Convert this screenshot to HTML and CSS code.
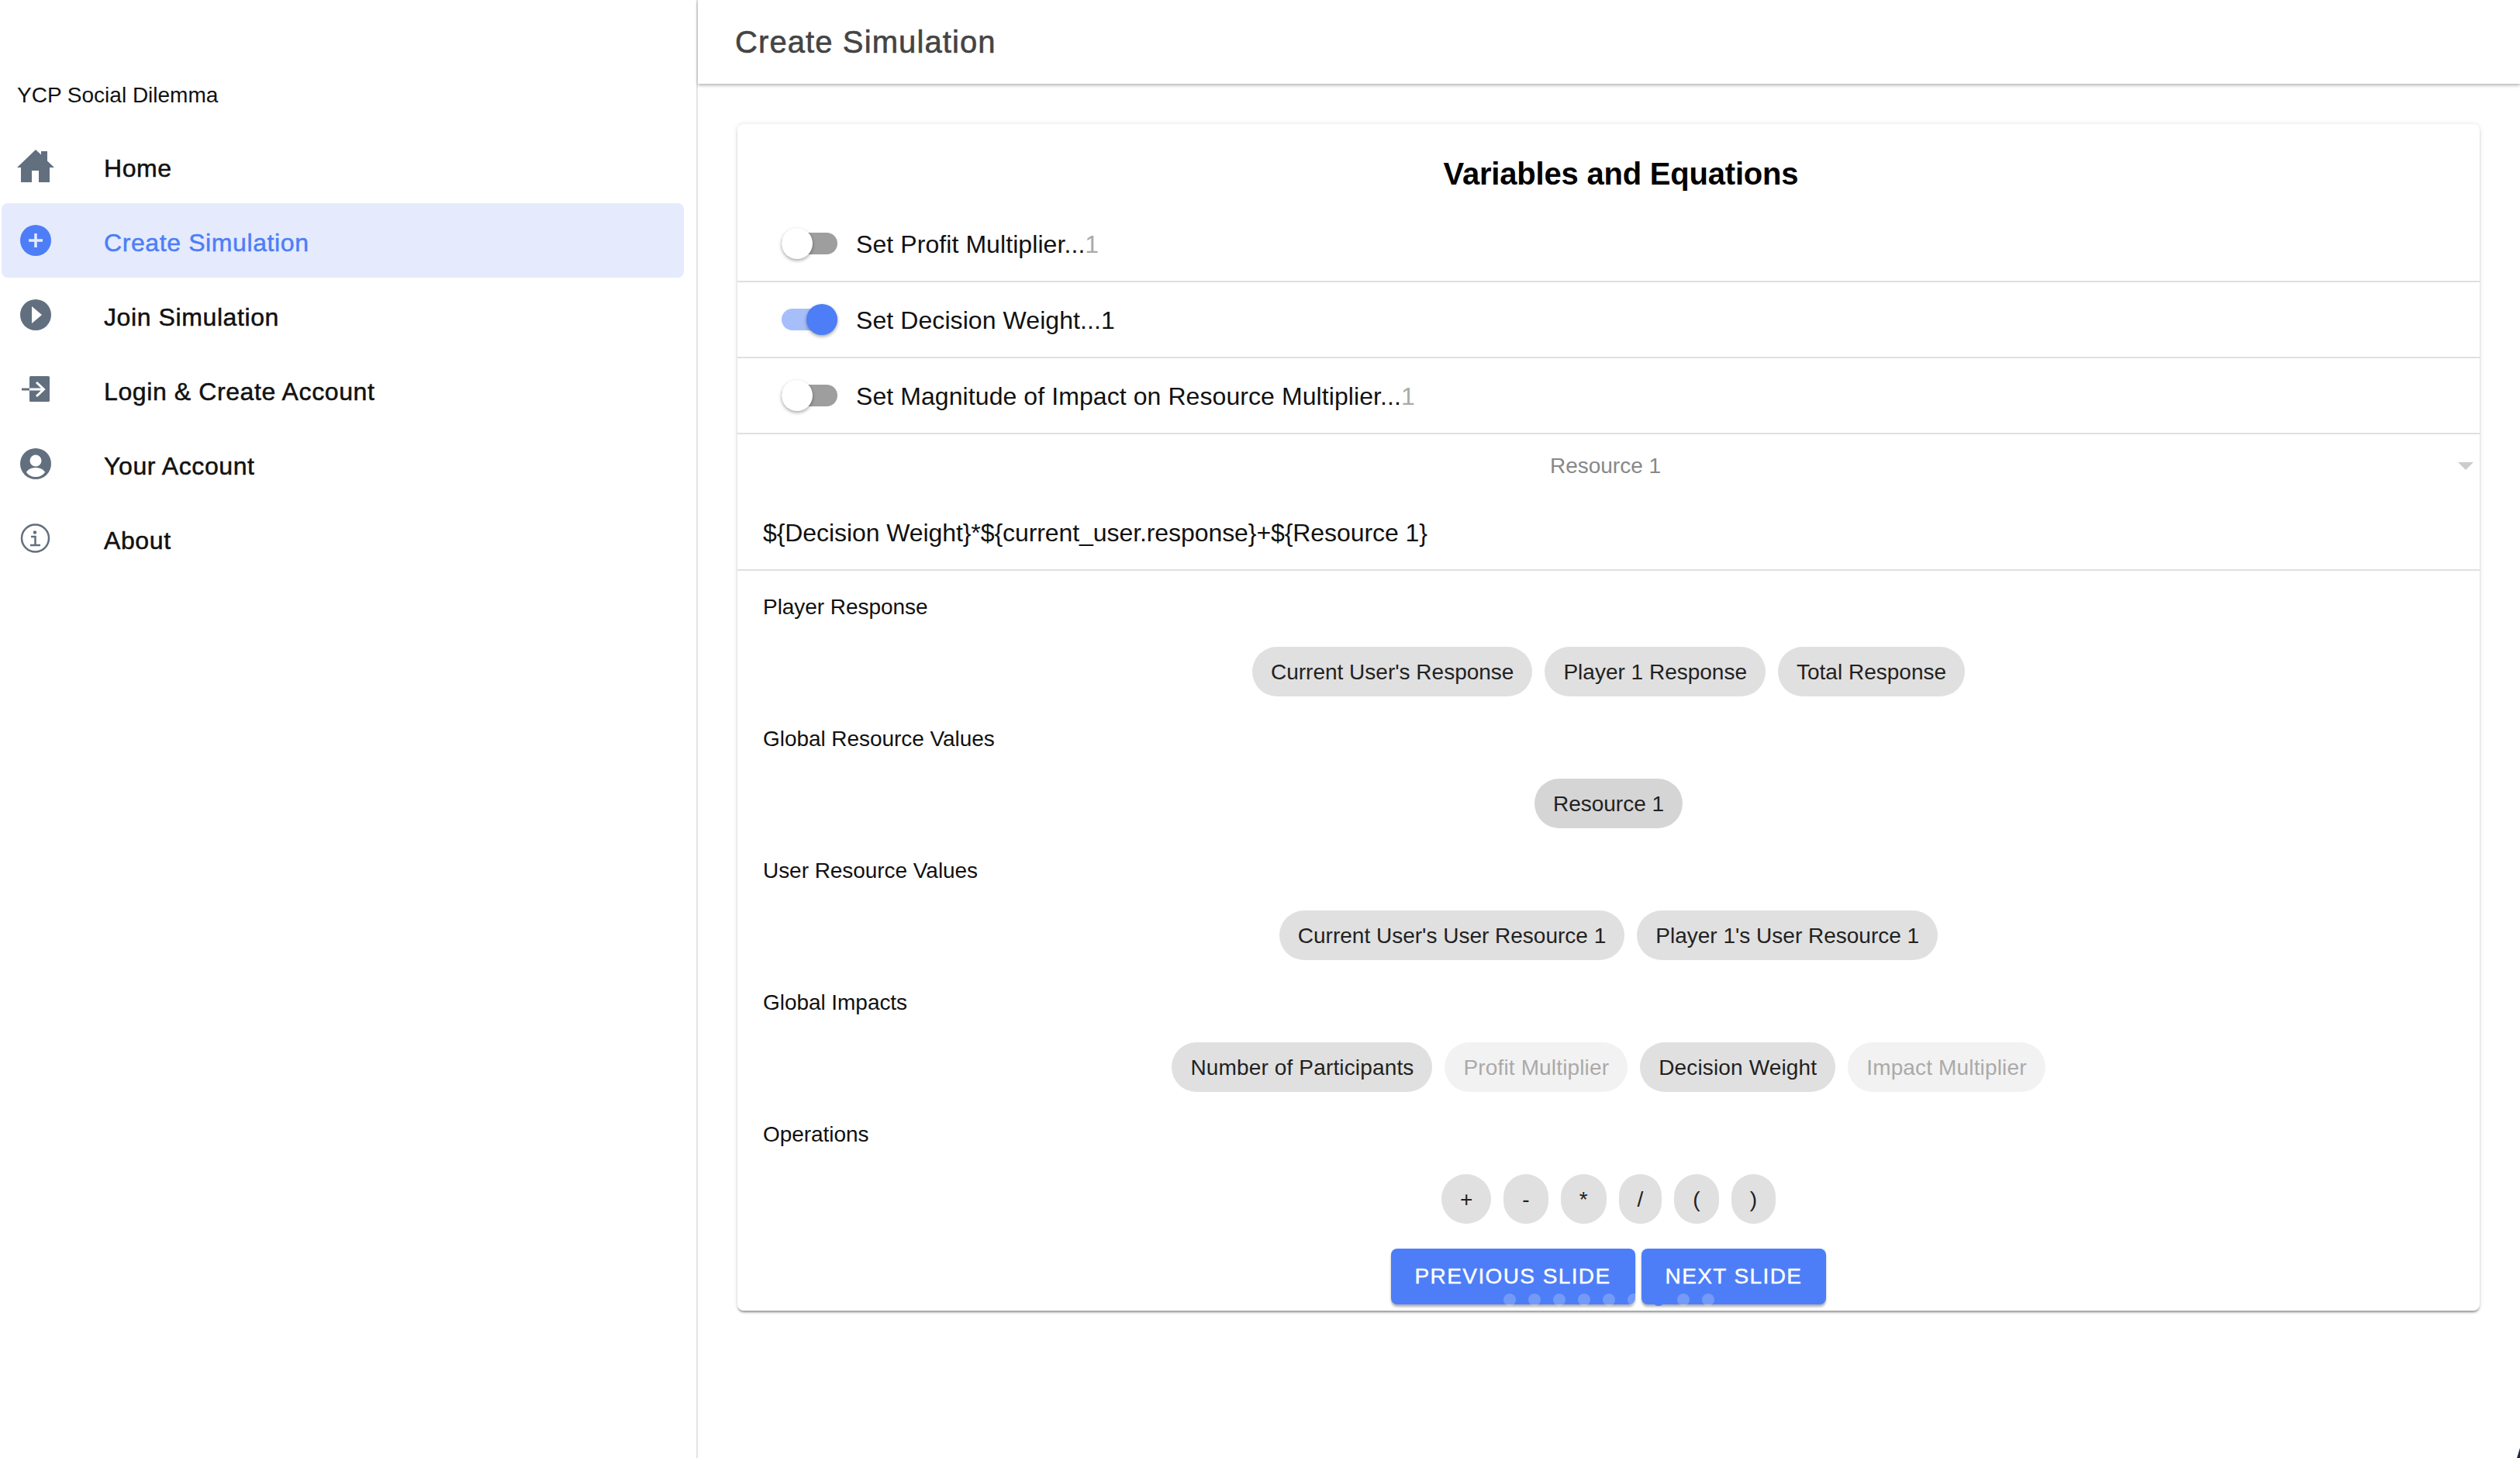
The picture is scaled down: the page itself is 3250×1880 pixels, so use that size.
FILE: index.html
```html
<!DOCTYPE html>
<html lang="en">
<head>
    <meta charset="UTF-8">
    <title>YCP Social Dilemma</title>
    <link rel="stylesheet" href="styles.css">
</head>
<body>
    <div class="layout">
        <aside class="sidebar">
            <div class="brand">YCP Social Dilemma</div>
            <ul class="nav">
                <li class="nav-item">
                    <span class="nav-icon">
                        <svg width="48" height="42" viewBox="0 0 48 42"><path fill="#626f7f" d="M0 23 24 0l7 6.500V2h8v12.500L48 23h-6v19H28V27h-9v15H5V23z"/></svg>
                    </span>
                    <span class="nav-label">Home</span>
                </li>
                <li class="nav-item active">
                    <span class="nav-icon">
                        <svg width="40" height="40" viewBox="0 0 40 40"><circle cx="20" cy="20" r="20" fill="#4d7ef7"/><path stroke="#e5ebfd" stroke-width="3.500" d="M20 11v18M11 20h18"/></svg>
                    </span>
                    <span class="nav-label">Create Simulation</span>
                </li>
                <li class="nav-item">
                    <span class="nav-icon">
                        <svg width="40" height="40" viewBox="0 0 40 40"><circle cx="20" cy="20" r="20" fill="#626f7f"/><path fill="#fff" d="M15 9l13 11-13 11z"/></svg>
                    </span>
                    <span class="nav-label">Join Simulation</span>
                </li>
                <li class="nav-item">
                    <span class="nav-icon">
                        <svg width="40" height="34" viewBox="0 0 40 34"><rect x="12" y="0" width="26" height="33" rx="1.500" fill="#626f7f"/><path stroke="#626f7f" stroke-width="3" d="M2 17h10"/><path stroke="#fff" stroke-width="3" fill="none" d="M12 17h18M21 8l9.500 9-9.500 9"/></svg>
                    </span>
                    <span class="nav-label">Login &amp; Create Account</span>
                </li>
                <li class="nav-item">
                    <span class="nav-icon">
                        <svg width="40" height="40" viewBox="0 0 40 40"><circle cx="20" cy="20" r="20" fill="#626f7f"/><circle cx="20" cy="16" r="7.500" fill="#fff"/><path fill="#fff" d="M8 31c2-4 7-6 12-6s10 2 12 6c-3 4-7 6-12 6s-9-2-12-6z"/></svg>
                    </span>
                    <span class="nav-label">Your Account</span>
                </li>
                <li class="nav-item">
                    <span class="nav-icon">
                        <svg width="40" height="40" viewBox="0 0 40 40"><circle cx="19.500" cy="20" r="17.500" fill="none" stroke="#626f7f" stroke-width="2.500"/><circle cx="19" cy="12.500" r="2.200" fill="#626f7f"/><path fill="none" stroke="#626f7f" stroke-width="2.500" d="M14 18h5.500v11M13 29h13"/></svg>
                    </span>
                    <span class="nav-label">About</span>
                </li>
            </ul>
        </aside>

        <div class="content">
            <header class="topbar">Create Simulation</header>
            <main class="main">
                <section class="card">
                    <h2 class="card-title">Variables and Equations</h2>

                    <div class="switch-row">
                        <span class="switch"><span class="track"></span><span class="thumb"></span></span>
                        <span class="switch-text">Set Profit Multiplier...<span class="muted">1</span></span>
                    </div>
                    <div class="switch-row">
                        <span class="switch on"><span class="track"></span><span class="thumb"></span></span>
                        <span class="switch-text">Set Decision Weight...1</span>
                    </div>
                    <div class="switch-row">
                        <span class="switch"><span class="track"></span><span class="thumb"></span></span>
                        <span class="switch-text">Set Magnitude of Impact on Resource Multiplier...<span class="muted">1</span></span>
                    </div>

                    <div class="select-row">
                        <span class="select-value">Resource 1</span>
                        <span class="select-arrow"></span>
                    </div>
                    <div class="formula">${Decision Weight}*${current_user.response}+${Resource 1}</div>

                    <div class="groups">
                        <div class="group">
                            <div class="group-label">Player Response</div>
                            <div class="chips">
                                <span class="chip">Current User's Response</span>
                                <span class="chip">Player 1 Response</span>
                                <span class="chip">Total Response</span>
                            </div>
                        </div>
                        <div class="group">
                            <div class="group-label">Global Resource Values</div>
                            <div class="chips">
                                <span class="chip selected">Resource 1</span>
                            </div>
                        </div>
                        <div class="group">
                            <div class="group-label">User Resource Values</div>
                            <div class="chips">
                                <span class="chip">Current User's User Resource 1</span>
                                <span class="chip">Player 1's User Resource 1</span>
                            </div>
                        </div>
                        <div class="group">
                            <div class="group-label">Global Impacts</div>
                            <div class="chips impacts">
                                <span class="chip">Number of Participants</span>
                                <span class="chip disabled">Profit Multiplier</span>
                                <span class="chip">Decision Weight</span>
                                <span class="chip disabled">Impact Multiplier</span>
                            </div>
                        </div>
                        <div class="group">
                            <div class="group-label">Operations</div>
                            <div class="chips">
                                <span class="chip">+</span>
                                <span class="chip">-</span>
                                <span class="chip">*</span>
                                <span class="chip">/</span>
                                <span class="chip">(</span>
                                <span class="chip">)</span>
                            </div>
                        </div>
                    </div>

                    <div class="actions">
                        <button class="btn">Previous Slide</button>
                        <button class="btn">Next Slide</button>
                    </div>

                    <div class="stepper">
                        <span class="dot"></span>
                        <span class="dot"></span>
                        <span class="dot"></span>
                        <span class="dot"></span>
                        <span class="dot"></span>
                        <span class="dot"></span>
                        <span class="dot current"></span>
                        <span class="dot"></span>
                        <span class="dot"></span>
                    </div>
                </section>
            </main>
        </div>
    </div>
    <div class="window-corner"></div>
</body>
</html>
```

FILE: styles.css
```css
/* Reset default styles */
* {
  box-sizing: border-box;
  margin: 0;
  padding: 0;
}

html,
body {
  height: 100%;
  overflow: hidden;
}

body {
  font-family: "Liberation Sans", Arial, sans-serif;
  background-color: #fff;
  color: #111;
}

.layout {
  display: flex;
  height: 100%;
}

/* Sidebar */
.sidebar {
  width: 900px;
  flex-shrink: 0;
  border-right: 2px solid #e4e4e4;
}

.brand {
  padding: 103px 0 23px 22px;
  font-size: 28px;
  line-height: 40px;
}

.nav {
  list-style-type: none;
}

.nav-item {
  display: flex;
  align-items: center;
  width: 880px;
  height: 96px;
  margin-left: 2px;
  border-radius: 8px;
  font-size: 32px;
}

.nav-item.active {
  background-color: #e5ebfd;
  color: #4d7ef7;
}

.nav-icon {
  display: flex;
  justify-content: center;
  width: 88px;
  margin-right: 44px;
}

.nav-label {
  padding-top: 6px;
  letter-spacing: 0.6px;
  -webkit-text-stroke: 0.5px currentColor;
}

/* Top bar */
.content {
  flex: 1;
  display: flex;
  flex-direction: column;
  min-width: 0;
}

.topbar {
  height: 108px;
  padding: 0 0 0 48px;
  font-size: 40px;
  line-height: 108px;
  letter-spacing: 1.1px;
  color: #444;
  -webkit-text-stroke: 0.6px currentColor;
  box-shadow: 0 2px 4px rgba(0, 0, 0, 0.3);
}

.main {
  padding: 52px 52px 0 51px;
}

/* Card */
.card {
  position: relative;
  height: 1530px;
  border-radius: 8px;
  background-color: #fff;
  box-shadow: 0 3px 3px -1px rgba(0, 0, 0, 0.4), 0 0 6px rgba(0, 0, 0, 0.12);
}

.card-title {
  height: 106px;
  padding: 42px 0 0 32px;
  font-size: 40px;
  line-height: 44px;
  font-weight: bold;
  letter-spacing: -0.2px;
  text-align: center;
  color: #000;
}

.switch-row {
  display: flex;
  align-items: center;
  gap: 24px;
  height: 98px;
  padding-left: 57px;
  border-bottom: 2px solid #e0e0e0;
  font-size: 32px;
  line-height: 38px;
  letter-spacing: 0.08px;
}

.switch-text {
  padding-top: 2px;
}

.muted {
  color: #aaa;
}

.switch {
  position: relative;
  width: 72px;
  height: 40px;
}

.track {
  position: absolute;
  left: 0;
  top: 6px;
  width: 72px;
  height: 28px;
  border-radius: 14px;
  background-color: #9e9e9e;
}

.thumb {
  position: absolute;
  left: 0;
  top: 0;
  width: 40px;
  height: 40px;
  border-radius: 50%;
  background-color: #fff;
  box-shadow: 0 2px 4px rgba(0, 0, 0, 0.35);
}

.switch.on .track {
  background-color: #a6bffb;
}

.switch.on .thumb {
  left: 32px;
  background-color: #4d7ef7;
}

.select-row {
  position: relative;
  height: 78px;
  padding-right: 8px;
  font-size: 28px;
  line-height: 82px;
  text-align: center;
  color: #888;
}

.select-arrow {
  position: absolute;
  right: 8px;
  top: 36px;
  border-left: 10px solid transparent;
  border-right: 10px solid transparent;
  border-top: 10px solid #ccc;
}

.formula {
  height: 98px;
  padding: 0 0 0 33px;
  border-bottom: 2px solid #e0e0e0;
  font-size: 32px;
  line-height: 98px;
  letter-spacing: -0.08px;
}

.groups {
  display: grid;
  gap: 38px;
  padding-top: 30px;
}

.group-label {
  padding-left: 33px;
  margin-bottom: 36px;
  font-size: 28px;
  line-height: 34px;
  height: 32px;
  letter-spacing: -0.05px;
}

.chips {
  display: flex;
  justify-content: center;
  gap: 16px;
}

.chips.impacts {
  letter-spacing: 0.15px;
}

.chip {
  height: 64px;
  padding: 0 24px;
  border-radius: 32px;
  background-color: #e0e0e0;
  font-size: 28px;
  line-height: 66px;
  color: #222;
  white-space: nowrap;
}

.chip.selected {
  background-color: #d5d5d5;
}

.chip.disabled {
  background-color: #f2f2f2;
  color: #aaa;
}

.actions {
  display: flex;
  justify-content: center;
  gap: 8px;
  margin-top: 32px;
}

.btn {
  height: 72px;
  padding: 0 31px;
  border: none;
  border-radius: 8px;
  background-color: #4d7ef7;
  color: #fff;
  font-family: inherit;
  font-size: 28px;
  letter-spacing: 1.400px;
  text-transform: uppercase;
  -webkit-text-stroke: 0.4px currentColor;
  cursor: pointer;
  box-shadow: 0 3px 3px rgba(0, 0, 0, 0.3);
}

.stepper {
  position: absolute;
  left: 50%;
  bottom: 6px;
  display: flex;
  gap: 16px;
  transform: translateX(-50%);
}

.dot {
  width: 16px;
  height: 16px;
  border-radius: 50%;
  background-color: rgba(255, 255, 255, 0.22);
}

.dot.current {
  background-color: #4d7ef7;
}

.window-corner {
  position: fixed;
  right: 0;
  bottom: 0;
  width: 4px;
  height: 13px;
  background-color: #24243c;
  clip-path: polygon(100% 0, 100% 100%, 0 100%);
}
```
